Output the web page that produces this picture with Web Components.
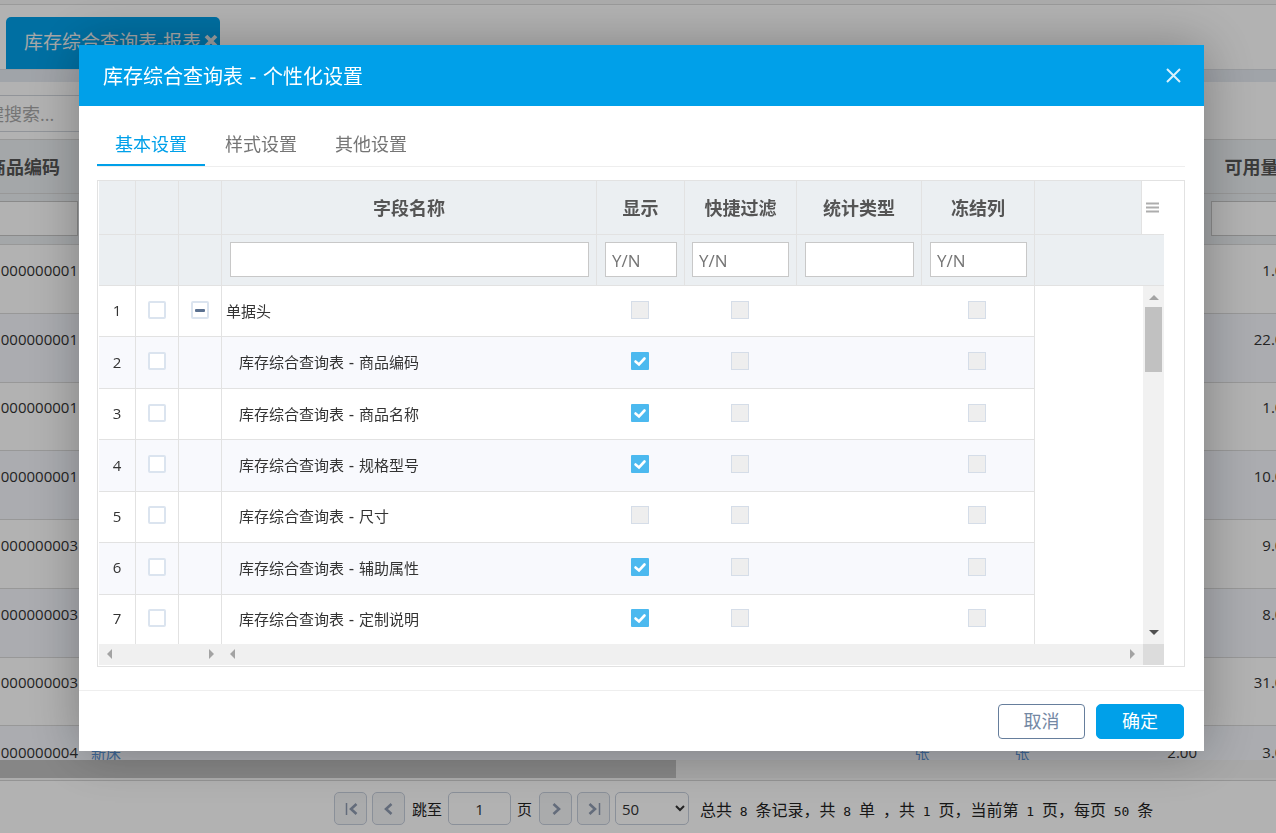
<!DOCTYPE html>
<html lang="zh-CN">
<head>
<meta charset="utf-8">
<title>库存综合查询表</title>
<style>
html, body {
    height: 100%;
}
body {
    --brand: #00a0e9;
    --line: #e2e2e2;
    --head: #ebeff2;
    --stripe: #f8f9fd;
    --text: #333333;
    --muted: #757575;
    margin: 0;
    overflow: hidden;
    background: #ffffff;
    color: var(--text);
    font-family: "Open Sans", "Noto Sans CJK SC", sans-serif;
    font-size: 15px;
}
</style>
</head>
<body>
<report-page>
    <page-tab slot="tabs">库存综合查询表-报表</page-tab>
    <stock-table></stock-table>
    <page-bar slot="footer"></page-bar>
</report-page>
<modal-dialog>
    <span slot="title">库存综合查询表 - 个性化设置</span>
    <tab-strip items="基本设置,样式设置,其他设置"></tab-strip>
    <field-grid></field-grid>
    <dialog-button slot="actions">取消</dialog-button>
    <dialog-button slot="actions" primary>确定</dialog-button>
</modal-dialog>

<script>
class BaseElement extends HTMLElement {
    connectedCallback() {
        if (this.shadowRoot) return;
        this.attachShadow({ mode: "open" });
        this.shadowRoot.innerHTML = `<style>:host,*{box-sizing:border-box}</style>` + this.render();
    }
}

class ReportPage extends BaseElement {
    render() {
        return /*html*/ `
<style>
:host { display: flex; flex-direction: column; height: 100vh; overflow: hidden; }
header { height: 70px; border-top: 4px solid #f6f6f6; border-bottom: 1px solid #dcdfe4; }
nav { padding: 12px 6px 0; border-top: 1px solid #dddddd; }
.band { height: 12px; background: #e6ebf2; }
.search { padding: 13px 0 7px; }
.search input { display: block; width: 300px; height: 37px; margin-left: -35px; padding: 0 20px; border: 1px solid #d0d5dc; font: 18px "Open Sans", "Noto Sans CJK SC", sans-serif; background: #ffffff; }
.search input::placeholder { color: #a8a8a8; }
main { flex: 1; min-height: 0; overflow: hidden; }
.scroll { height: 20px; background: #f1f1f1; border-bottom: 2px solid #f8f8f8; }
.scroll i { display: block; width: 53%; height: 18px; background: #c1c1c1; }
</style>
<header><nav><slot name="tabs"></slot></nav></header>
<div class="band"></div>
<div class="search"><input type="text" aria-label="搜索" placeholder="键搜索..."></div>
<main><slot></slot></main>
<div class="scroll"><i></i></div>
<slot name="footer"></slot>`;
    }
}

class PageTab extends BaseElement {
    render() {
        return /*html*/ `
<style>
:host { display: inline-flex; vertical-align: top; }
a { display: flex; align-items: center; width: 214px; height: 52px; padding: 0 2px 4px 18px; background: var(--brand); border-radius: 5px 5px 0 0; color: #f0f0f0; font-size: 19px; text-decoration: none; white-space: nowrap; }
svg { margin-left: 3px; flex: none; }
</style>
<a href="#"><slot></slot><svg width="14" height="14" viewBox="0 0 14 14"><path d="M2 2L12 12M12 2L2 12" stroke="#dfe5e8" stroke-width="3.800"/></svg></a>`;
    }
}

class StockTable extends BaseElement {
    render() {
        const rows = [
            ["000000001", "1.00"],
            ["000000001", "22.00"],
            ["000000001", "1.00"],
            ["000000001", "10.00"],
            ["000000003", "9.00"],
            ["000000003", "8.00"],
            ["000000003", "31.00"],
            ["000000004", "3.00", "新床", "张", "张", "2.00"]
        ];
        return /*html*/ `
<style>
:host { display: block; }
table { width: calc(100% + 61px); height: 658px; margin-left: -37px; table-layout: fixed; border-collapse: separate; border-spacing: 0; }
th, td { padding: 0; border-bottom: 1px solid #dadada; font-weight: normal; white-space: nowrap; }
th { height: 51px; border-right: 1px solid var(--line); background: var(--head); color: #555555; font-size: 18px; font-weight: bold; }
.titles th { height: 55px; padding-bottom: 2px; border-top: 1px solid #dadada; }
.filters th { padding: 0 7px 2px; }
input { display: block; width: 100%; height: 35px; border: 1px solid #c6c6c6; background: #ffffff; }
td { padding: 0 7px 18px; text-align: right; }
td:first-child, td:last-child { padding-right: 8px; }
td.link { padding-left: 5px; text-align: left; }
td.unit { text-align: center; }
a { color: #5a94d8; text-decoration: none; }
tbody tr:nth-child(even) td { background: #f5f7fd; }
</style>
<table>
<colgroup><col style="width:123px"><col><col style="width:100px"><col style="width:100px"><col style="width:132px"><col style="width:96px"></colgroup>
<thead>
<tr class="titles"><th>商品编码</th><th></th><th></th><th></th><th></th><th>可用量</th></tr>
<tr class="filters"><th><input type="text" aria-label="商品编码"></th><th></th><th></th><th></th><th></th><th><input type="text" aria-label="可用量"></th></tr>
</thead>
<tbody>${rows.map(r => `<tr><td>${r[0]}</td><td class="link"><a href="#">${r[2] || ""}</a></td><td class="unit"><a href="#">${r[3] || ""}</a></td><td class="unit"><a href="#">${r[4] || ""}</a></td><td>${r[5] || ""}</td><td>${r[1]}</td></tr>`).join("")}</tbody>
</table>`;
    }
}

class PageBar extends BaseElement {
    render() {
        const btn = (label, d) => `<button type="button" aria-label="${label}"><svg width="16" height="16" viewBox="0 0 16 16" fill="none" stroke="#8f9bb0"><path d="${d}" stroke-width="2.600"/>${label === "首页" ? '<path d="M3.500 2V14" stroke-width="1.500"/>' : ""}${label === "末页" ? '<path d="M13.500 2V14" stroke-width="1.500"/>' : ""}</svg></button>`;
        return /*html*/ `
<style>
:host { display: flex; align-items: center; flex: none; height: 53px; padding: 3px 0 0 334px; border-top: 1px solid #d4d4d4; white-space: nowrap; color: #222222; }
button, input, select { height: 33px; border: 1px solid #c6cedb; border-radius: 5px; background: #ffffff; font: 15px "Open Sans", sans-serif; color: #333333; }
button { display: flex; align-items: center; justify-content: center; width: 33px; margin-right: 5px; padding: 0; background: #f4f5f7; }
label { display: flex; align-items: center; gap: 6px; margin: 0 7px 0 2px; }
label input { width: 63px; text-align: center; }
select { width: 74px; padding: 0 2px; }
p { margin: 0 0 0 11px; font-size: 16px; white-space: pre; }
p b { font: 13px "DejaVu Sans Mono", monospace; }
</style>
${btn("首页", "M13.500 3L8 8L13.500 13")}
${btn("上一页", "M10.500 3L5 8L10.500 13")}
<label>跳至 <input type="text" value="1"> 页</label>
${btn("下一页", "M5.500 3L11 8L5.500 13")}
${btn("末页", "M3.500 3L9 8L3.500 13")}
<select aria-label="每页条数"><option>50</option></select>
<p>总共<b> 8 </b>条记录，共<b> 8 </b>单<b> </b>，共<b> 1 </b>页，当前第<b> 1 </b>页，每页<b> 50 </b>条</p>`;
    }
}

class ModalDialog extends BaseElement {
    render() {
        return /*html*/ `
<style>
:host { position: fixed; inset: 0; padding: 45px 72px 0 79px; background: rgba(0, 0, 0, 0.3); }
section { background: #ffffff; box-shadow: 1px 1px 50px rgba(0, 0, 0, 0.3); }
header { display: flex; align-items: center; justify-content: space-between; height: 61px; padding: 0 20px 0 24px; background: var(--brand); color: #ffffff; }
h1 { margin: 0; font: 20px "DejaVu Sans", "Noto Sans CJK SC", sans-serif; }
header button { display: flex; padding: 0; border: 0; background: none; }
.content { padding: 0 19px 23px 18px; }
footer { display: flex; justify-content: flex-end; gap: 11px; height: 61px; padding: 13px 20px 0; border-top: 1px solid #eeeeee; }
</style>
<section role="dialog" aria-label="个性化设置">
<header><h1><slot name="title"></slot></h1><button type="button" aria-label="关闭"><svg width="20" height="20" viewBox="0 0 20 20"><path d="M3 3L16 16M16 3L3 16" stroke="#d9f1fc" stroke-width="2"/></svg></button></header>
<div class="content"><slot></slot></div>
<footer><slot name="actions"></slot></footer>
</section>`;
    }
}

class DialogButton extends BaseElement {
    render() {
        return /*html*/ `
<style>
:host { display: block; }
button { display: block; width: 87px; height: 35px; padding: 0 0 3px; border: 1px solid #667e9c; border-radius: 4px; background: #ffffff; color: #7488a4; font: 18px "Noto Sans CJK SC", sans-serif; }
:host([primary]) button { width: 88px; border-color: var(--brand); border-radius: 5px; background: var(--brand); color: #ffffff; }
</style>
<button type="button"><slot></slot></button>`;
    }
}

class TabStrip extends BaseElement {
    render() {
        const items = this.getAttribute("items").split(",");
        return /*html*/ `
<style>
:host { display: flex; gap: 2px; height: 61px; margin-bottom: 13px; border-bottom: 1px solid #eeeeee; }
button { padding: 15px 18px 0; border: 0; border-bottom: 2px solid transparent; background: none; color: var(--muted); font: 18px "Noto Sans CJK SC", sans-serif; }
button.active { color: var(--brand); border-color: var(--brand); }
</style>
${items.map((t, i) => `<button type="button" role="tab" class="${i ? "" : "active"}">${t}</button>`).join("")}`;
    }
}

class FieldGrid extends BaseElement {
    render() {
        const name = t => `库存综合查询表 - ${t}`;
        const rows = [
            ["单据头", false],
            [name("商品编码"), true],
            [name("商品名称"), true],
            [name("规格型号"), true],
            [name("尺寸"), false],
            [name("辅助属性"), true],
            [name("定制说明"), true]
        ];
        const box = (label, on) => `<input type="checkbox" disabled aria-label="${label}"${on ? " checked" : ""}>`;
        const filter = (label, hint) => `<th><input type="text" aria-label="${label}" placeholder="${hint}"></th>`;
        const scrollbar = `<td class="bar" rowspan="7"><div><svg width="20" height="21" viewBox="0 0 20 21"><path d="M5 14L10 9L15 14z" fill="#a3a3a3"/></svg><i></i><svg width="20" height="21" viewBox="0 0 20 21"><path d="M5 7L10 12L15 7z" fill="#505050"/></svg></div></td>`;
        const left = `<svg width="20" height="20" viewBox="0 0 20 20"><path d="M13 5L8 10L13 15z" fill="#a3a3a3"/></svg>`;
        const right = `<svg width="20" height="20" viewBox="0 0 20 20"><path d="M7 5L12 10L7 15z" fill="#a3a3a3"/></svg>`;
        return /*html*/ `
<style>
:host { display: block; padding: 0 20px 1px 1px; border: 1px solid var(--line); }
table { width: 100%; height: 463px; table-layout: fixed; border-collapse: separate; border-spacing: 0; }
th, td { padding: 0 0 2px; border-bottom: 1px solid var(--line); text-align: center; }
th { border-right: 1px solid var(--line); background: var(--head); color: #555555; font-size: 18px; }
.titles th { height: 54px; }
.filters th { height: 51px; padding: 0 7px 2px; }
.filters th:nth-child(4), .filters th:nth-child(5), .filters th:nth-child(7), .filters th:nth-child(8) { padding-left: 8px; }
.filters th:last-child, th.menu { border-right: 0; }
th.menu { padding: 0; background: #ffffff; }
th.menu svg { display: block; margin-left: 4px; }
.filters input { display: block; width: 100%; height: 35px; padding: 2px 6px 0; border: 1px solid #c8c8c8; background: #ffffff; font: 17px "Open Sans", sans-serif; }
.filters input::placeholder { color: var(--muted); }
td.line { border-right: 1px solid var(--line); }
td.check { padding-right: 2px; }
td.name { padding-left: 17px; text-align: left; font-family: "DejaVu Sans", "Noto Sans CJK SC", sans-serif; }
tr.root td.name { padding-left: 4px; }
td.blank { border: 0; }
tbody tr:nth-child(even) td:not(.blank) { background: var(--stripe); }
tbody tr:last-child td { border-bottom: 0; }
input[type=checkbox] { appearance: none; display: block; width: 18px; height: 18px; margin: 0 auto 1px; border: 1px solid #d5dde8; background: #eeeeee; }
input[type=checkbox]:enabled { border: 2px solid #dbe4ef; border-radius: 2px; background: #ffffff; }
input[type=checkbox]:checked { border: 0; border-radius: 1px; background: #4cb9ef url('data:image/svg+xml,<svg xmlns="http://www.w3.org/2000/svg" viewBox="0 0 18 18"><path d="M4.500 9.500L8 12.500L13.500 6.500" fill="none" stroke="white" stroke-width="2.600" stroke-linecap="round"/></svg>'); }
.fold { display: block; width: 18px; height: 18px; margin: 0 auto; padding: 0; border: 2px solid #dbe4ef; border-radius: 2px; background: #ffffff; }
.fold i { display: block; width: 10px; height: 3px; margin: 0 auto; border-radius: 1px; background: #5b7190; }
td.bar { padding: 0 0 0 1px; border: 0; vertical-align: top; }
td.bar div { display: flex; flex-direction: column; align-items: center; height: 358px; background: #f1f1f1; }
td.bar i { width: 17px; height: 65px; margin-bottom: auto; background: #c1c1c1; }
.scroll { display: grid; grid-template-columns: 123px 1fr 21px; height: 21px; background: #f0f0f0; }
.scroll span { display: flex; justify-content: space-between; }
.scroll .corner { background: #dcdcdc; }
</style>
<table>
<colgroup><col style="width:37px"><col style="width:43px"><col style="width:43px"><col><col style="width:88px"><col style="width:112px"><col style="width:125px"><col style="width:113px"><col style="width:107px"><col style="width:22px"></colgroup>
<thead>
<tr class="titles"><th></th><th></th><th></th><th>字段名称</th><th>显示</th><th>快捷过滤</th><th>统计类型</th><th>冻结列</th><th></th><th class="menu"><svg width="13" height="11" viewBox="0 0 13 11"><path d="M0 1.500H13M0 5.500H13M0 9.500H13" stroke="#adadad" stroke-width="2.200"/></svg></th></tr>
<tr class="filters"><th></th><th></th><th></th>${filter("字段名称", "")}${filter("显示", "Y/N")}${filter("快捷过滤", "Y/N")}${filter("统计类型", "")}${filter("冻结列", "Y/N")}<th colspan="2"></th></tr>
</thead>
<tbody>
${rows.map(([text, on], i) => `<tr class="${i ? "" : "root"}"><td class="line">${i + 1}</td><td class="line"><input type="checkbox" aria-label="选择 ${i + 1}"></td><td class="line">${i ? "" : '<button type="button" class="fold" aria-label="收起"><i></i></button>'}</td><td class="name">${text}</td><td class="check">${box("显示", on)}</td><td class="check">${box("快捷过滤")}</td><td></td><td class="line check">${box("冻结列")}</td><td class="blank"></td>${i ? "" : scrollbar}</tr>`).join("")}
</tbody>
</table>
<div class="scroll"><span>${left}${right}</span><span>${left}${right}</span><span class="corner"></span></div>`;
    }
}

customElements.define("report-page", ReportPage);
customElements.define("page-tab", PageTab);
customElements.define("stock-table", StockTable);
customElements.define("page-bar", PageBar);
customElements.define("modal-dialog", ModalDialog);
customElements.define("dialog-button", DialogButton);
customElements.define("tab-strip", TabStrip);
customElements.define("field-grid", FieldGrid);
</script>
</body>
</html>
